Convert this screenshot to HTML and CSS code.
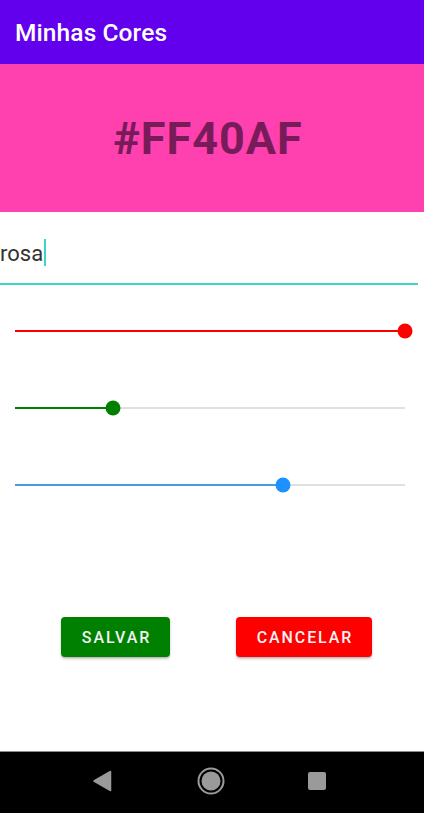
FILE: index.html
```html
<!DOCTYPE html>
<html lang="pt">
<head>
<meta charset="utf-8">
<title>Minhas Cores</title>
<link rel="stylesheet" href="styles.css">
</head>
<body>
<div class="screen">
  <header class="appbar">
    <h1 class="appbar-title">Minhas Cores</h1>
  </header>
  <section class="preview">
    <span class="preview-hex">#FF40AF</span>
  </section>
  <div class="field">
    <span class="field-text">rosa</span><span class="field-cursor"></span>
  </div>
  <div class="sliders">
    <div class="slider slider-red">
      <div class="track"><div class="track-fill" style="width:100%"></div><div class="thumb" style="left:100%"></div></div>
    </div>
    <div class="slider slider-green">
      <div class="track"><div class="track-fill" style="width:25.1%"></div><div class="thumb" style="left:25.1%"></div></div>
    </div>
    <div class="slider slider-blue">
      <div class="track"><div class="track-fill" style="width:68.6%"></div><div class="thumb" style="left:68.6%"></div></div>
    </div>
  </div>
  <div class="actions">
    <button class="btn btn-save">SALVAR</button>
    <button class="btn btn-cancel">CANCELAR</button>
  </div>
  <div class="spacer"></div>
  <nav class="navbar">
    <svg class="nav-icon" width="20" height="22" viewBox="0 0 20 22"><path d="M18.5 1.5 L18.5 20.5 L2 11 Z" fill="#9a9a9a" stroke="#9a9a9a" stroke-width="1.5" stroke-linejoin="round"/></svg>
    <svg class="nav-icon" width="30" height="30" viewBox="0 0 30 30"><circle cx="15" cy="15" r="12.5" fill="none" stroke="#9a9a9a" stroke-width="2"/><circle cx="15" cy="15" r="9.5" fill="#9a9a9a"/></svg>
    <svg class="nav-icon" width="20" height="20" viewBox="0 0 20 20"><rect x="1" y="1" width="18" height="18" rx="2" fill="#9a9a9a"/></svg>
  </nav>
</div>
</body>
</html>
```

FILE: styles.css
```css
* { box-sizing: border-box; }
html, body { margin: 0; padding: 0; }
body {
  font-family: Roboto, "Noto Sans", "Liberation Sans", sans-serif;
  background: #ffffff;
}
.screen {
  width: 424px;
  height: 813px;
  display: flex;
  flex-direction: column;
  overflow: hidden;
}
.appbar {
  height: 64px;
  flex: none;
  background: #6200ee;
  display: flex;
  align-items: center;
  padding-left: 15px;
}
.appbar-title {
  margin: 0;
  font-size: 24.5px;
  font-weight: 500;
  color: #ffffff;
  letter-spacing: 0.1px;
}
.preview {
  height: 148px;
  flex: none;
  background: #ff40af;
  display: flex;
  align-items: center;
  justify-content: center;
}
.preview-hex {
  font-size: 45px;
  font-weight: 700;
  color: #771c58;
  letter-spacing: 1px;
  padding-right: 8px;
}
.field {
  width: 418px;
  flex: none;
  padding: 26px 0 14px;
  border-bottom: 2px solid #3fd4c8;
  display: flex;
  align-items: center;
  height: 73px;
}
.field-text {
  font-size: 22px;
  color: #333333;
  line-height: 30px;
}
.field-cursor {
  width: 2px;
  height: 27px;
  background: #3fd4c8;
  margin-left: 1px;
  margin-top: -3px;
}
.sliders {
  flex: none;
  padding: 31px 19px 0 15px;
  display: flex;
  flex-direction: column;
  gap: 47px;
}
.slider {
  height: 30px;
  display: flex;
  align-items: center;
}
.track {
  position: relative;
  width: 100%;
  height: 2px;
  background: #e0e0e0;
}
.track-fill {
  height: 2px;
}
.thumb {
  position: absolute;
  top: 50%;
  width: 15px;
  height: 15px;
  border-radius: 50%;
  transform: translate(-50%, -50%);
}
.slider-red .track-fill, .slider-red .thumb { background: #ff0000; }
.slider-red .track-fill { height: 2.5px; margin-top: -0.25px; }
.slider-green .track-fill, .slider-green .thumb { background: #008000; }
.slider-green .track-fill { height: 2.5px; margin-top: -0.25px; }
.slider-blue .track-fill, .slider-blue .thumb { background: #1e90ff; }
.slider-blue .track-fill { background: #4a9be6; height: 2.5px; margin-top: -0.25px; }
.actions {
  flex: none;
  margin-top: 117px;
  padding-left: 61px;
  display: flex;
  gap: 66px;
}
.btn {
  height: 40px;
  border: none;
  border-radius: 4px;
  font-family: Roboto, "Noto Sans", "Liberation Sans", sans-serif;
  font-size: 16px;
  font-weight: 500;
  letter-spacing: 1.9px;
  color: #f2f2f2;
  box-shadow: 0 2px 3px rgba(0,0,0,0.2), 0 1px 1px rgba(0,0,0,0.12);
  padding: 0 0 0 2px;
}
.btn-save { width: 109px; background: #008000; }
.btn-cancel { width: 136px; background: #ff0000; }
.spacer { flex: 1; }
.navbar {
  height: 62px;
  flex: none;
  background: #000000;
  border-top: 1px solid #8c8c8c;
  display: flex;
  align-items: center;
  padding-bottom: 4px;
}
.nav-icon { display: block; }
.nav-icon:nth-child(1) { margin-left: 92px; }
.nav-icon:nth-child(2) { margin-left: 84px; }
.nav-icon:nth-child(3) { margin-left: 81px; }
```
